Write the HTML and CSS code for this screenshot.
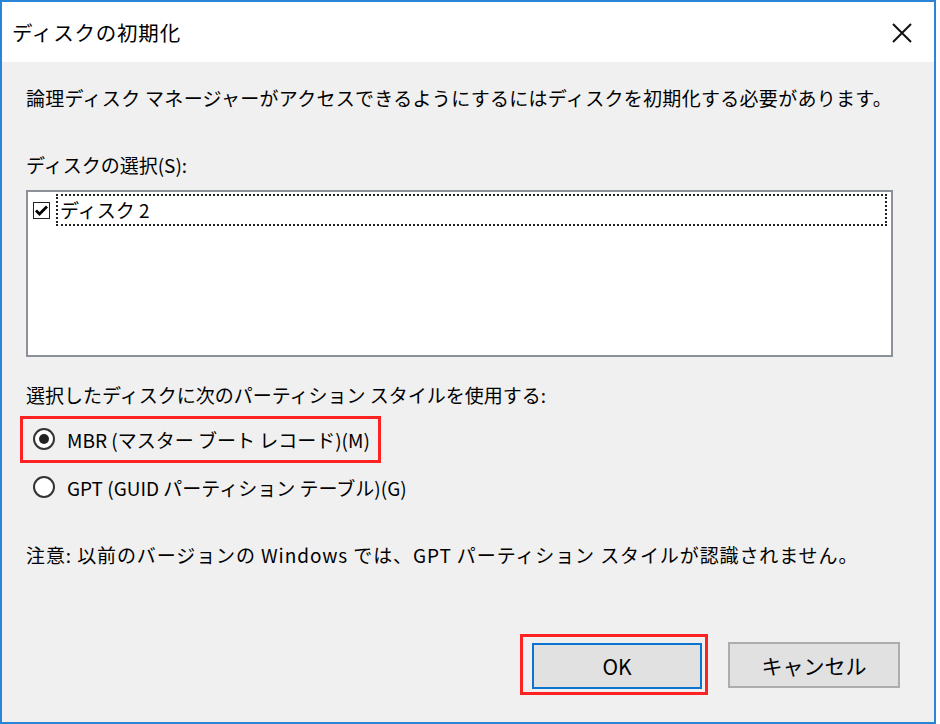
FILE: index.html
```html
<!DOCTYPE html>
<html lang="ja">
<head>
    <meta charset="UTF-8">
    <title>ディスクの初期化</title>
    <link rel="stylesheet" href="styles.css">
</head>
<body>
    <div class="window">
        <div class="titlebar">
            <span class="title">ディスクの初期化</span>
            <svg class="close" width="22" height="22" viewBox="0 0 22 22">
                <path d="M2 2 L20 20 M20 2 L2 20" stroke="#111" stroke-width="2" fill="none"/>
            </svg>
        </div>

        <div class="content">
            <p class="intro">論理ディスク マネージャーがアクセスできるようにするにはディスクを初期化する必要があります。</p>

            <p class="label">ディスクの選択(S):</p>
            <div class="listbox">
                <div class="list-item">
                    <span class="checkbox">
                        <svg width="15" height="15" viewBox="0 0 15 15">
                            <path d="M2 7.5 L5.5 11 L13 3.5" stroke="#000" stroke-width="2.8" fill="none"/>
                        </svg>
                    </span>
                    <span class="item-text">ディスク 2</span>
                </div>
            </div>

            <p class="label label-style">選択したディスクに次のパーティション スタイルを使用する:</p>
            <div class="highlight">
                <label class="radio-row">
                    <span class="radio checked"></span>
                    <span>MBR (マスター ブート レコード)(M)</span>
                </label>
            </div>
            <label class="radio-row radio-gpt">
                <span class="radio"></span>
                <span>GPT (GUID パーティション テーブル)(G)</span>
            </label>

            <p class="note">注意: 以前のバージョンの Windows では、GPT パーティション スタイルが認識されません。</p>

            <div class="buttons">
                <div class="highlight highlight-ok">
                    <button class="btn btn-default">OK</button>
                </div>
                <button class="btn">キャンセル</button>
            </div>
        </div>
    </div>
</body>
</html>
```

FILE: styles.css
```css
body {
    margin: 0;
    background: #fff;
    font-family: "Noto Sans CJK JP", "Noto Sans", sans-serif;
    color: #000;
}

.window {
    box-sizing: border-box;
    width: 936px;
    height: 724px;
    border: 2px solid #2b84d6;
    background: #f0f0f0;
    display: flex;
    flex-direction: column;
}

.titlebar {
    height: 60px;
    background: #fff;
    display: flex;
    align-items: center;
    justify-content: space-between;
    padding: 0 21px 0 10px;
}

.title {
    font-size: 20.5px;
    letter-spacing: 0.8px;
}

.close {
    margin-top: 1px;
}

.content {
    padding: 22px 41px 0 24px;
    font-size: 19px;
}

p {
    margin: 0;
    line-height: 28px;
    white-space: nowrap;
}

.intro {
    letter-spacing: 0.3px;
}

.label {
    margin-top: 39px;
}

.listbox {
    margin-top: 11px;
    height: 167px;
    background: #fff;
    border: 2px solid #8c9099;
    box-sizing: border-box;
    padding: 2px 4px 0 5px;
}

.list-item {
    display: flex;
    align-items: center;
    gap: 6px;
}

.checkbox {
    width: 15px;
    height: 15px;
    border: 1px solid #222;
    background: #fff;
    display: flex;
    flex-shrink: 0;
}

.item-text {
    flex: 1;
    height: 28px;
    line-height: 28px;
    border: 2px dotted #222;
    padding-left: 2px;
}

.label-style {
    margin-top: 24px;
}

.radio-row {
    display: flex;
    align-items: center;
    gap: 12px;
    height: 28px;
}

.highlight {
    margin: 7px 0 0 -6px;
    width: 361px;
    border: 3px solid #ff2222;
    padding: 6px 0 7px 10px;
    box-sizing: border-box;
}

.radio {
    width: 18px;
    height: 18px;
    border: 2px solid #333;
    border-radius: 50%;
    background: #fff;
    box-sizing: content-box;
    display: flex;
    align-items: center;
    justify-content: center;
}

.radio.checked::after {
    content: "";
    width: 10px;
    height: 10px;
    border-radius: 50%;
    background: #222;
}

.radio-gpt {
    margin-top: 10px;
    padding-left: 7px;
}

.note {
    margin-top: 40px;
    letter-spacing: 0.9px;
}

.buttons {
    margin-top: 65px;
    display: flex;
    justify-content: flex-end;
    align-items: center;
    gap: 20px;
    margin-right: -7px;
}

.highlight-ok {
    width: auto;
    margin: 0;
    padding: 6px 3px 3px 9px;
}

.btn {
    width: 172px;
    height: 46px;
    font-family: inherit;
    font-size: 21px;
    background: #e1e1e1;
    border: 2px solid #adadad;
    color: #000;
    padding: 0;
}

.btn-default {
    width: 170px;
    border-color: #0a74d0;
}
```
